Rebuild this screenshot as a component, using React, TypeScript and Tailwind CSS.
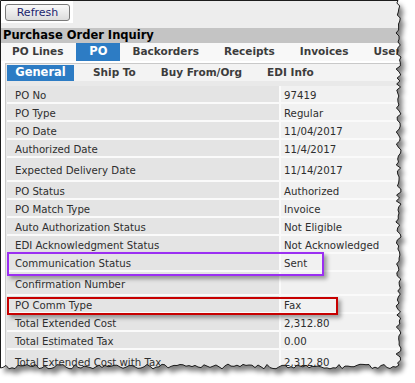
import React from 'react'

type Row = { label: string; value: string; tall?: boolean }

const rows: Row[] = [
  { label: 'PO No', value: '97419' },
  { label: 'PO Type', value: 'Regular' },
  { label: 'PO Date', value: '11/04/2017' },
  { label: 'Authorized Date', value: '11/4/2017' },
  { label: 'Expected Delivery Date', value: '11/14/2017', tall: true },
  { label: 'PO Status', value: 'Authorized' },
  { label: 'PO Match Type', value: 'Invoice' },
  { label: 'Auto Authorization Status', value: 'Not Eligible' },
  { label: 'EDI Acknowledgment Status', value: 'Not Acknowledged' },
  { label: 'Communication Status', value: 'Sent' },
  { label: 'Confirmation Number', value: '', tall: true },
  { label: 'PO Comm Type', value: 'Fax' },
  { label: 'Total Extended Cost', value: '2,312.80' },
  { label: 'Total Estimated Tax', value: '0.00' },
  { label: 'Total Extended Cost with Tax', value: '2,312.80', tall: true },
]

// little deterministic jitter for the torn paper edge
function jitter(i: number, amp: number) {
  const s = Math.sin(i * 12.9898 + 78.233) * 43758.5453
  return (s - Math.floor(s) - 0.5) * 2 * amp
}

function tornPath() {
  const pts: string[] = ['M0.5 0.5', 'L398 0.5']
  for (let y = 3, i = 0; y < 364; y += 3, i++) {
    pts.push(`L${(398.5 + jitter(i, 2.6)).toFixed(1)} ${y}`)
  }
  pts.push('L399 365')
  for (let x = 396, i = 200; x > 2; x -= 3, i++) {
    pts.push(`L${x} ${(366.5 + jitter(i, 2.4)).toFixed(1)}`)
  }
  pts.push('L0.5 368', 'Z')
  return pts.join(' ')
}

function TornEdge() {
  const shape = tornPath()
  const outside = `M0 0H415V383H0Z ${shape}`
  return (
    <svg className="pointer-events-none absolute inset-0" width={415} height={383}>
      <defs>
        <filter id="tornBlur" x="-10%" y="-10%" width="120%" height="120%">
          <feGaussianBlur stdDeviation="2.4" />
        </filter>
        <clipPath id="tornOutside">
          <path d={outside} clipRule="evenodd" />
        </clipPath>
      </defs>
      <path d={outside} fill="#ffffff" fillRule="evenodd" />
      <g clipPath="url(#tornOutside)">
        <path d={shape} transform="translate(4 5)" fill="#000" opacity={0.5} filter="url(#tornBlur)" />
      </g>
      <path d={shape} fill="none" stroke="#1c1c1c" strokeWidth={1} />
    </svg>
  )
}

export default function App() {
  return (
    <div className="relative h-[383px] w-[415px] overflow-hidden bg-white font-['DejaVu_Sans',sans-serif] text-[#2e2e2e]">
      <div className="h-[28px] bg-[#ededed]">
        <div className="h-[23px] w-[73px] bg-white pl-[5px] pt-[4px]">
          <button className="flex h-[17px] w-[65px] items-center justify-center rounded-[3px] border border-[#7a7a7a] bg-gradient-to-b from-[#fafafa] to-[#dcdcdc] text-[11px] leading-none text-[#1b1f6e]">
            Refresh
          </button>
        </div>
      </div>

      <div className="h-[15px] whitespace-nowrap bg-[#c4c4c4] pl-[3px] text-[11.5px] font-bold leading-[15px] text-black">
        Purchase Order Inquiry
      </div>

      <div className="flex h-[18px] items-center overflow-hidden whitespace-nowrap bg-[#f8f8f8] text-[10.5px] font-bold text-[#3c3c3c]">
        <span className="ml-[12px] shrink-0">PO Lines</span>
        <span className="ml-[13px] flex h-[18px] w-[44px] shrink-0 items-center justify-center bg-[#2d7cc4] text-[11.5px] text-white">PO</span>
        <span className="ml-[12px] shrink-0">Backorders</span>
        <span className="ml-[25px] shrink-0">Receipts</span>
        <span className="ml-[25px] shrink-0">Invoices</span>
        <span className="ml-[25px] shrink-0">Users</span>
      </div>

      <div className="ml-[5px] mt-[2px] border-l border-t border-[#c9c9c9] bg-[#e9e9e9] pl-[1px]">
        <div className="flex h-[17px] items-center whitespace-nowrap bg-[#f3f3f3] text-[10.5px] font-bold text-[#3c3c3c]">
          <span className="flex h-[16px] w-[67px] shrink-0 items-center justify-center bg-[#2d7cc4] text-[11.5px] text-white">General</span>
          <span className="ml-[19px] shrink-0">Ship To</span>
          <span className="ml-[25px] shrink-0">Buy From/Org</span>
          <span className="ml-[25px] shrink-0">EDI Info</span>
        </div>

        <div className="mt-[5px] flex flex-col gap-[2px] bg-[#fafafa] text-[10.2px]">
          {rows.map((row) => (
            <div key={row.label} className={`flex ${row.tall ? 'h-[22px]' : 'h-[16px]'}`}>
              <div className="flex w-[272px] shrink-0 items-center whitespace-nowrap bg-[#e4e4e4] pl-[8px] pt-[3px]">{row.label}</div>
              <div className="ml-[2px] flex flex-1 items-center whitespace-nowrap bg-[#f1f1f1] pl-[3px] pt-[3px]">{row.value}</div>
            </div>
          ))}
        </div>
      </div>

      {/* annotation boxes */}
      <div className="absolute left-[7px] top-[252px] h-[24px] w-[317px] border-2 border-[#9b2ff2] shadow-[3px_3px_4px_rgba(0,0,0,0.35)]" />
      <div className="absolute left-[7px] top-[297px] h-[18px] w-[331px] border-2 border-[#c70000] shadow-[3px_3px_4px_rgba(0,0,0,0.35)]" />

      <TornEdge />
    </div>
  )
}
